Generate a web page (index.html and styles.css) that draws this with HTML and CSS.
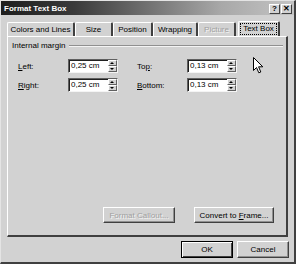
FILE: index.html
```html
<!DOCTYPE html>
<html lang="en">
<head>
  <meta charset="UTF-8">
  <title>Format Text Box</title>
  <link rel="stylesheet" href="styles.css">
</head>
<body>
  <div class="window">
    <!-- title bar -->
    <div class="titlebar">
      <span class="title">Format Text Box</span>
      <div class="caption-btns">
        <span class="cap-btn">?</span>
        <span class="cap-btn">&#x2715;</span>
      </div>
    </div>

    <!-- tabs -->
    <div class="tabs">
      <div class="tab tab-colors">Colors and Lines</div>
      <div class="tab tab-size">Size</div>
      <div class="tab tab-position">Position</div>
      <div class="tab tab-wrapping">Wrapping</div>
      <div class="tab tab-picture disabled">Picture</div>
      <div class="tab tab-textbox selected"><span class="focus">Text Box</span></div>
    </div>

    <div class="panel">
      <div class="group-title">
        <span>Internal margin</span>
        <div class="rule"></div>
      </div>

      <div class="fields">
        <label class="lbl"><u>L</u>eft:</label>
        <div class="spin gap-right"><span class="val">0,25 cm</span><span class="arrows"><i class="up"></i><i class="down"></i></span></div>
        <label class="lbl">To<u>p</u>:</label>
        <div class="spin"><span class="val">0,13 cm</span><span class="arrows"><i class="up"></i><i class="down"></i></span></div>

        <label class="lbl"><u>R</u>ight:</label>
        <div class="spin gap-right"><span class="val">0,25 cm</span><span class="arrows"><i class="up"></i><i class="down"></i></span></div>
        <label class="lbl"><u>B</u>ottom:</label>
        <div class="spin"><span class="val">0,13 cm</span><span class="arrows"><i class="up"></i><i class="down"></i></span></div>
      </div>

      <div class="panel-btns">
        <button class="btn btn-callout disabled">Format Callout...</button>
        <button class="btn btn-frame">Convert to <u>F</u>rame...</button>
      </div>
    </div>

    <div class="footer">
      <button class="btn btn-ok">OK</button>
      <button class="btn btn-cancel">Cancel</button>
    </div>

    <!-- mouse pointer -->
    <svg class="cursor" width="12" height="18" viewBox="0 0 12 18">
      <path d="M0.5 0.5 L0.5 13.5 L3.5 10.5 L5.8 15.8 L7.8 15 L5.6 9.8 L9.8 9.8 Z" fill="#fff" stroke="#000" stroke-width="1"/>
    </svg>
  </div>
</body>
</html>
```

FILE: styles.css
```css
body {
  margin: 0;
  padding: 0;
  background: #d2d2d2;
  font-family: "Liberation Sans", Arial, sans-serif;
  font-size: 8px;
  color: #000;
  white-space: nowrap;
}
.window {
  position: relative;
  width: 296px;
  height: 264px;
  box-sizing: border-box;
  background: #d2d2d2;
  border-top: 1px solid #e4e4e4;
  border-left: 1px solid #e4e4e4;
  border-right: 2px solid #404040;
  border-bottom: 2px solid #404040;
  overflow: hidden;
}
.titlebar {
  height: 14px;
  display: flex;
  align-items: center;
  justify-content: space-between;
  padding: 0 2px 0 3px;
  background: linear-gradient(90deg, #1e1e1e, #3a3a3a 25%, #a8a8a8 75%, #c4c4c4);
}
.title {
  color: #fff;
  font-weight: bold;
  font-size: 8px;
}
.caption-btns {
  display: flex;
  gap: 1px;
  margin-top: 1px;
}
.cap-btn {
  width: 11px;
  height: 10px;
  box-sizing: border-box;
  background: #d2d2d2;
  border: 1px solid;
  border-color: #fff #404040 #404040 #fff;
  font-size: 8px;
  font-weight: bold;
  line-height: 8px;
  text-align: center;
}
.tabs {
  display: flex;
  padding: 6px 0 0 6px;
  height: 15px;
  align-items: flex-end;
}
.tab {
  height: 14px;
  box-sizing: border-box;
  border-top: 1px solid #fff;
  border-left: 1px solid #fff;
  border-right: 2px solid #404040;
  border-radius: 2px 2px 0 0;
  display: flex;
  align-items: center;
  justify-content: center;
}
.tab-colors { width: 68px; }
.tab-size { width: 38px; }
.tab-position { width: 40px; }
.tab-wrapping { width: 45px; }
.tab-picture { width: 38px; }
.tab-textbox { width: 42px; margin-left: 2px; height: 15px; }
.disabled { color: #a0a0a0; text-shadow: 1px 1px 0 #f4f4f4; }
.focus {
  border: 1px dotted #000;
  padding: 0 2px;
  line-height: 10px;
}
.panel {
  margin: 0 6px 0 6px;
  height: 201px;
  box-sizing: border-box;
  border-top: 1px solid #fff;
  border-left: 1px solid #fff;
  border-right: 2px solid #404040;
  border-bottom: 2px solid #404040;
  padding: 4px 3px 0 4px;
  display: flex;
  flex-direction: column;
}
.group-title {
  display: flex;
  align-items: center;
  gap: 4px;
}
.rule {
  flex: 1;
  border-top: 1px solid #909090;
  border-bottom: 1px solid #f4f4f4;
}
.fields {
  display: grid;
  grid-template-columns: 50px 69px 50px 51px;
  grid-auto-rows: 14px;
  row-gap: 5px;
  margin: 9px 0 0 6px;
  align-items: center;
}
.lbl { display: block; }
.spin {
  width: 50px;
  height: 14px;
  box-sizing: border-box;
  display: flex;
  background: #fff;
  border: 1px solid;
  border-color: #606060 #f4f4f4 #f4f4f4 #606060;
  box-shadow: inset 1px 1px 0 #202020;
}
.val {
  flex: 1;
  padding-left: 2px;
  line-height: 12px;
}
.arrows {
  width: 9px;
  display: flex;
  flex-direction: column;
}
.arrows i {
  flex: 1;
  background: #d2d2d2;
  border: 1px solid;
  border-color: #fff #606060 #606060 #fff;
  position: relative;
}
.arrows i::after {
  content: "";
  position: absolute;
  left: 1px;
  top: 1px;
  border-left: 2px solid transparent;
  border-right: 2px solid transparent;
}
.arrows .up::after { border-bottom: 2px solid #000; }
.arrows .down::after { border-top: 2px solid #000; }
.panel-btns {
  margin-top: auto;
  margin-bottom: 12px;
  display: flex;
  justify-content: flex-end;
  gap: 19px;
  padding-right: 9px;
}
.btn {
  font-family: "Liberation Sans", Arial, sans-serif;
  font-size: 8px;
  height: 16px;
  padding: 0;
  background: #d2d2d2;
  box-sizing: border-box;
  border: 1px solid;
  border-color: #fff #404040 #404040 #fff;
  box-shadow: inset -1px -1px 0 #909090;
}
.btn-callout { width: 72px; }
.btn-frame { width: 80px; }
.footer {
  display: flex;
  justify-content: flex-end;
  gap: 4px;
  padding: 4px 5px 0 0;
}
.btn-ok, .btn-cancel { width: 52px; height: 17px; }
.btn-ok {
  border: 1px solid #000;
  box-shadow: inset 1px 1px 0 #fff, inset -1px -1px 0 #404040;
}
.cursor {
  position: absolute;
  left: 252px;
  top: 56px;
}
```
